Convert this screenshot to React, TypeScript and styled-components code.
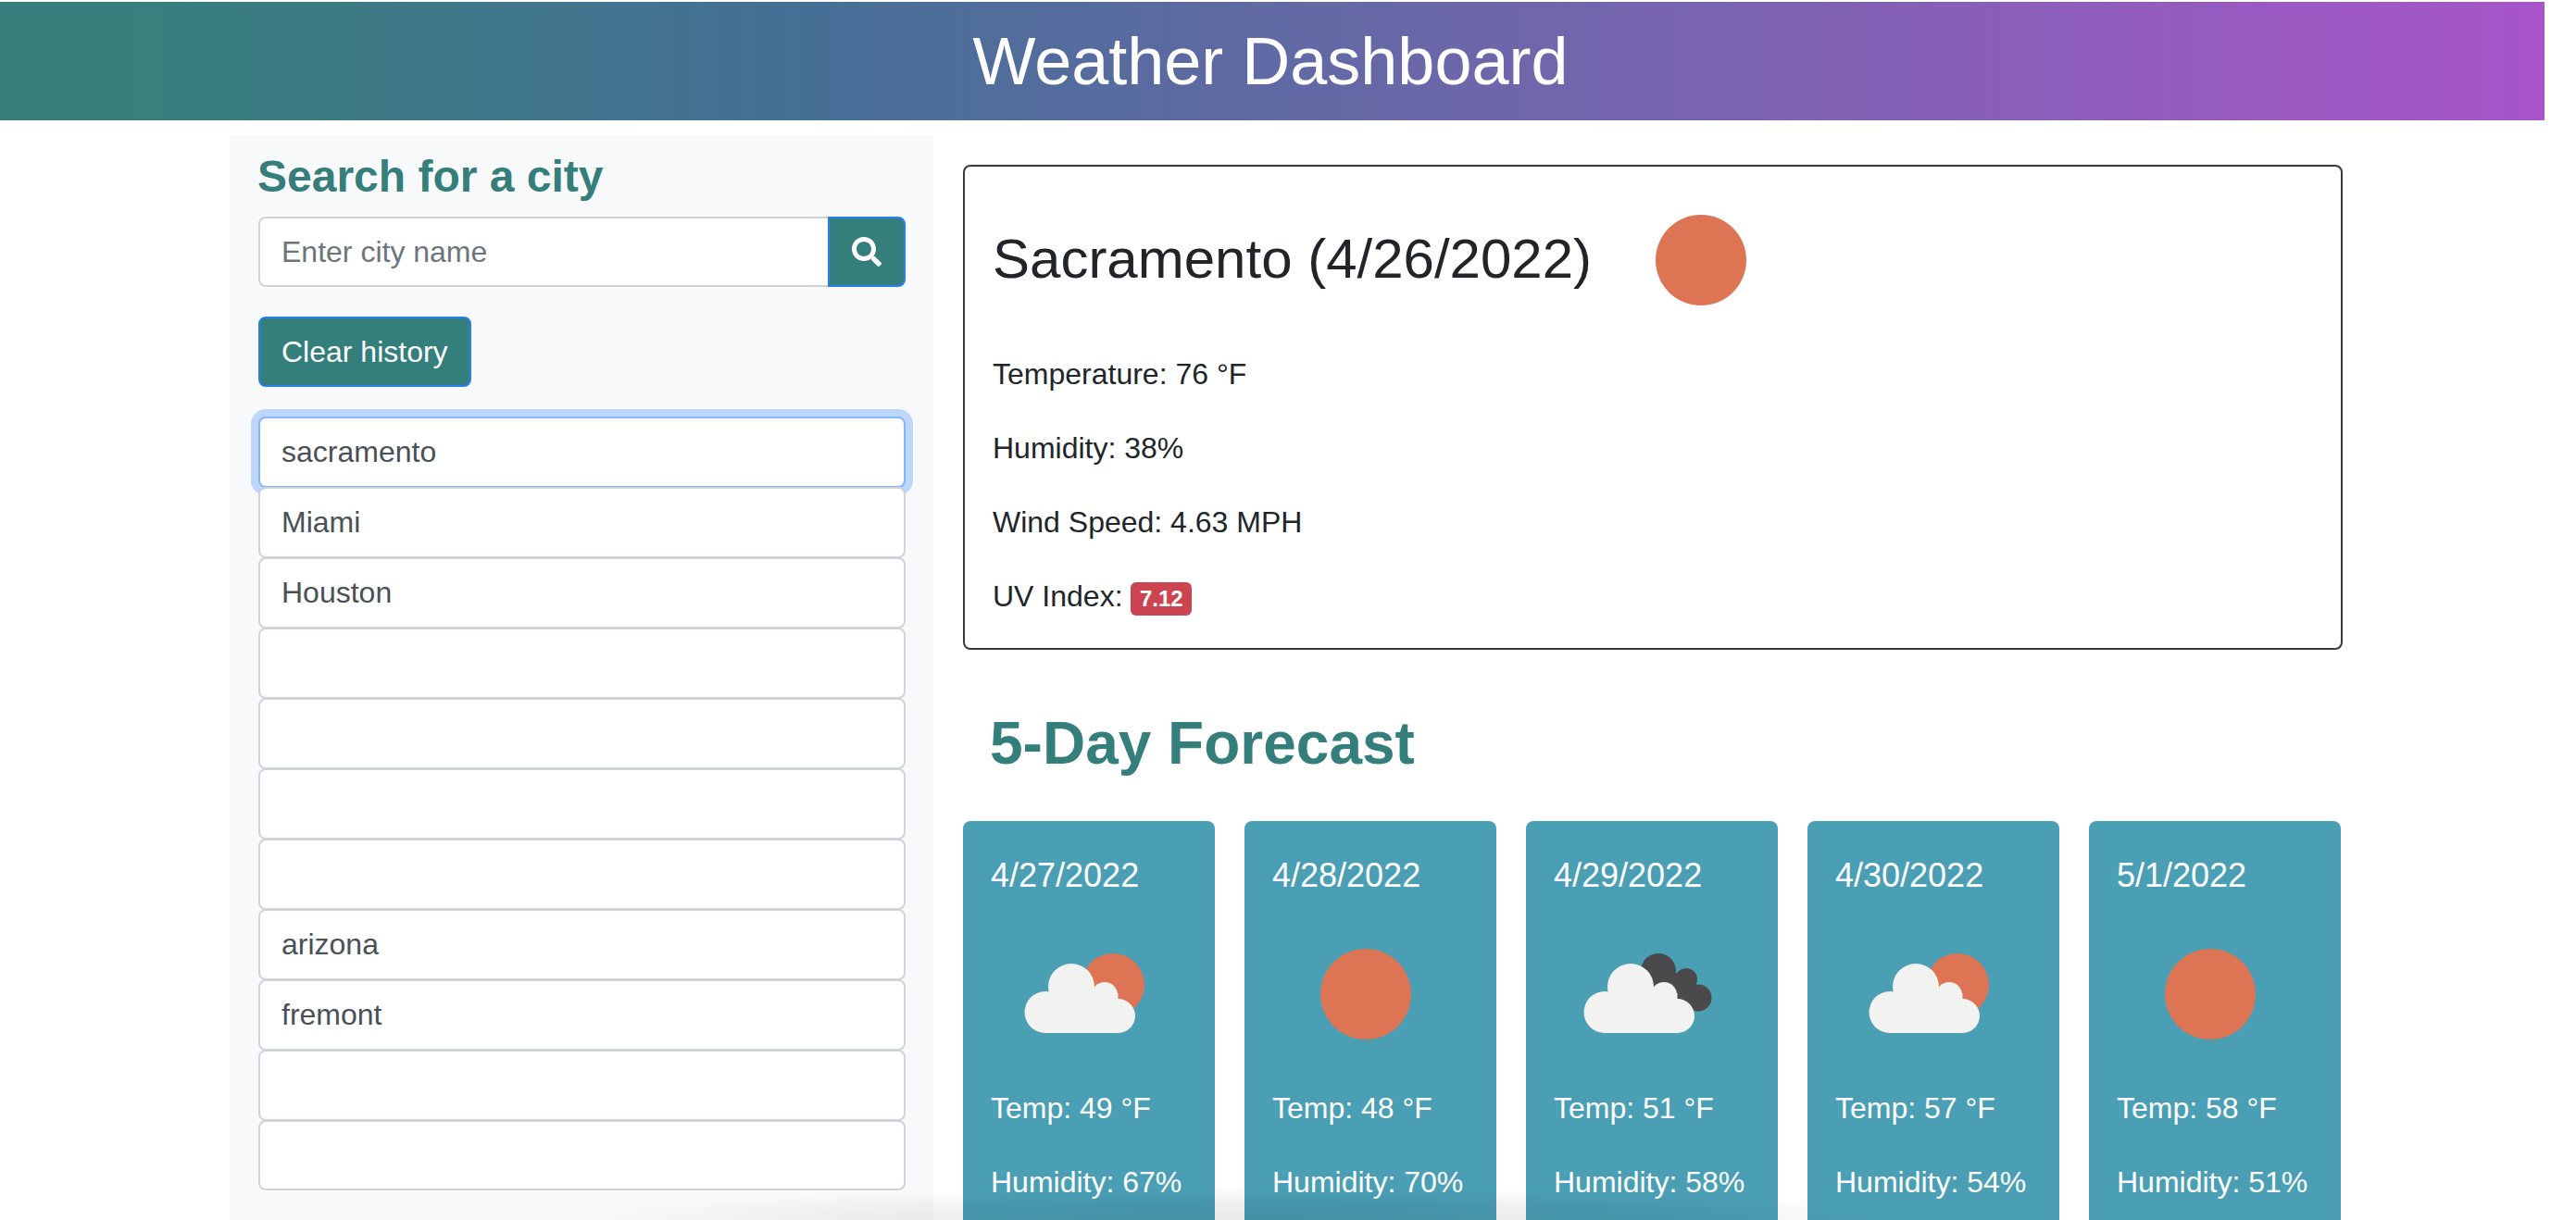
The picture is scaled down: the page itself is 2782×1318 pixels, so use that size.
import styled, { createGlobalStyle } from "styled-components";
import { FaSearch } from "react-icons/fa";

const GlobalStyle = createGlobalStyle`
  html, body {
    margin: 0;
    background: #fff;
  }
  * {
    box-sizing: border-box;
  }
  body {
    font-family: "Liberation Sans", Arial, sans-serif;
    font-size: 32px;
    line-height: 48px;
    color: #212529;
  }
`;

const Page = styled.div`
  position: relative;
  width: 2782px;
  height: 1318px;
  overflow: hidden;
`;

const Header = styled.header`
  width: 2748px;
  height: 128px;
  margin-top: 2px;
  padding-right: 4px;
  background: linear-gradient(
    90deg,
    #377f7c 0%,
    #377f7c 5%,
    #466f96 32%,
    #7565ae 64%,
    #a855c9 100%
  );
  display: flex;
  align-items: center;
  justify-content: center;
`;

const Title = styled.h1`
  margin: 0;
  color: #fff;
  font-size: 72px;
  font-weight: 400;
  line-height: 1.2;
`;

const Content = styled.div`
  display: flex;
  height: 1188px;
  padding: 16px 0 0 248px;
`;

const Sidebar = styled.aside`
  width: 760px;
  flex-shrink: 0;
  padding: 16px 30px 0 31px;
  background: #f8f9fa;
`;

const SearchTitle = styled.h2`
  margin: 0 0 14px -1px;
  color: #347e7c;
  font-size: 48px;
  font-weight: 700;
  line-height: 1.2;
`;

const SearchGroup = styled.form`
  display: flex;
  height: 76px;
  margin: 0 0 32px;
`;

const SearchInput = styled.input`
  flex: 1;
  min-width: 0;
  padding: 12px 23px;
  border: 2px solid #ced4da;
  border-right: none;
  border-radius: 8px 0 0 8px;
  background: #fff;
  color: #495057;
  font: inherit;
  &::placeholder {
    color: #6c757d;
    opacity: 1;
  }
`;

const SearchButton = styled.button`
  width: 84px;
  padding: 0;
  display: flex;
  align-items: center;
  justify-content: center;
  border: 2px solid #2a7ef0;
  border-radius: 0 8px 8px 0;
  background: #347e7c;
  color: #fff;
  font-size: 32px;
`;

const ClearButton = styled.button`
  display: block;
  height: 76px;
  padding: 12px 23px;
  margin: 0 0 32px;
  border: 2px solid #2a7ef0;
  border-radius: 8px;
  background: #347e7c;
  color: #fff;
  font: inherit;
`;

const HistoryList = styled.div`
  display: flex;
  flex-direction: column;
`;

const HistoryItem = styled.button<{ $focused?: boolean }>`
  display: block;
  width: 100%;
  height: 77px;
  margin: 0 0 -1px;
  padding: 12px 23px 13px;
  text-align: left;
  background: #fff;
  color: #495057;
  font: inherit;
  border-radius: 8px;
  border: 2px solid ${({ $focused }) => ($focused ? "#86b7fe" : "#ced4da")};
  box-shadow: ${({ $focused }) =>
    $focused ? "0 0 0 8px rgba(13, 110, 253, 0.25)" : "none"};
  &:last-child {
    height: 76px;
  }
`;

const Main = styled.main`
  width: 1490px;
  margin-left: 32px;
  padding-top: 16px;
`;

const TodayCard = styled.section`
  height: 524px;
  margin-top: 16px;
  border: 2px solid #343a40;
  border-radius: 8px;
  padding: 0 30px;
`;

const TodayHead = styled.div`
  display: flex;
  align-items: center;
  height: 200px;
`;

const CityTitle = styled.h2`
  margin: 0 17px 0 0;
  font-size: 60px;
  font-weight: 400;
  line-height: 1.2;
  white-space: nowrap;
`;

const Stat = styled.p`
  margin: 0 0 32px;
`;

const UvBadge = styled.span`
  display: inline-block;
  height: 36px;
  padding: 0 9.5px;
  border-radius: 6px;
  background: #cc444f;
  color: #fff;
  font-size: 24px;
  font-weight: 700;
  line-height: 36px;
  vertical-align: 0;
`;

const ForecastTitle = styled.h2`
  margin: 63px 0 45px;
  padding-left: 29px;
  color: #347e7c;
  font-size: 64px;
  font-weight: 700;
  line-height: 1.2;
`;

const ForecastRow = styled.div`
  display: grid;
  grid-template-columns: repeat(5, 272px);
  gap: 32px;
`;

const ForecastCard = styled.article`
  height: 560px;
  padding: 37px 30px 0;
  border-radius: 8px;
  background: #4a9fb5;
  color: #fff;
`;

const ForecastDate = styled.h3`
  margin: 0 0 6px;
  font-size: 36px;
  font-weight: 400;
  line-height: 1.2;
`;

const WeatherSvg = styled.svg`
  display: block;
  flex-shrink: 0;
  width: 200px;
  height: 200px;
`;

const BottomShade = styled.div`
  position: absolute;
  left: 620px;
  bottom: 0;
  width: 1500px;
  height: 36px;
  pointer-events: none;
  background: radial-gradient(
    ellipse 50% 100% at 50% 100%,
    rgba(0, 0, 0, 0.09) 0%,
    rgba(0, 0, 0, 0.06) 50%,
    rgba(0, 0, 0, 0) 100%
  );
`;

type IconKind = "clear" | "few" | "broken";

function Cloud({ shift = 0 }: { shift?: number }) {
  return (
    <g fill="#f2f2f0" transform={`translate(${shift} 0)`}>
      <circle cx="59" cy="120.5" r="22.5" />
      <circle cx="87" cy="93" r="25" />
      <circle cx="123" cy="102" r="14" />
      <circle cx="137.5" cy="124.5" r="18.5" />
      <rect x="59" y="100" width="78.5" height="43" />
    </g>
  );
}

function WeatherIcon({ kind }: { kind: IconKind }) {
  return (
    <WeatherSvg viewBox="0 0 200 200">
      {kind === "clear" && <circle cx="101" cy="101" r="49" fill="#dd7555" />}
      {kind === "few" && (
        <>
          <circle cx="132" cy="91" r="34" fill="#dd7555" />
          <Cloud />
        </>
      )}
      {kind === "broken" && (
        <>
          <g fill="#4a4a4c">
            <circle cx="113" cy="76" r="19" />
            <circle cx="143" cy="85" r="12" />
            <circle cx="156" cy="105" r="14.5" />
            <circle cx="130" cy="98" r="20" />
          </g>
          <Cloud shift={-4} />
        </>
      )}
    </WeatherSvg>
  );
}

const history = [
  "sacramento",
  "Miami",
  "Houston",
  "",
  "",
  "",
  "",
  "arizona",
  "fremont",
  "",
  "",
];

const forecast: { date: string; icon: IconKind; temp: number; humidity: number }[] = [
  { date: "4/27/2022", icon: "few", temp: 49, humidity: 67 },
  { date: "4/28/2022", icon: "clear", temp: 48, humidity: 70 },
  { date: "4/29/2022", icon: "broken", temp: 51, humidity: 58 },
  { date: "4/30/2022", icon: "few", temp: 57, humidity: 54 },
  { date: "5/1/2022", icon: "clear", temp: 58, humidity: 51 },
];

export default function App() {
  return (
    <Page>
      <GlobalStyle />
      <Header>
        <Title>Weather Dashboard</Title>
      </Header>
      <Content>
        <Sidebar>
          <SearchTitle>Search for a city</SearchTitle>
          <SearchGroup>
            <SearchInput type="text" placeholder="Enter city name" />
            <SearchButton type="button" aria-label="Search">
              <FaSearch />
            </SearchButton>
          </SearchGroup>
          <ClearButton type="button">Clear history</ClearButton>
          <HistoryList>
            {history.map((city, i) => (
              <HistoryItem key={i} type="button" $focused={i === 0}>
                {city}
              </HistoryItem>
            ))}
          </HistoryList>
        </Sidebar>
        <Main>
          <TodayCard>
            <TodayHead>
              <CityTitle>Sacramento (4/26/2022)</CityTitle>
              <WeatherIcon kind="clear" />
            </TodayHead>
            <Stat>Temperature: 76 °F</Stat>
            <Stat>Humidity: 38%</Stat>
            <Stat>Wind Speed: 4.63 MPH</Stat>
            <Stat>
              UV Index: <UvBadge>7.12</UvBadge>
            </Stat>
          </TodayCard>
          <ForecastTitle>5-Day Forecast</ForecastTitle>
          <ForecastRow>
            {forecast.map((day) => (
              <ForecastCard key={day.date}>
                <ForecastDate>{day.date}</ForecastDate>
                <WeatherIcon kind={day.icon} />
                <Stat>Temp: {day.temp} °F</Stat>
                <Stat>Humidity: {day.humidity}%</Stat>
              </ForecastCard>
            ))}
          </ForecastRow>
        </Main>
      </Content>
      <BottomShade />
    </Page>
  );
}
